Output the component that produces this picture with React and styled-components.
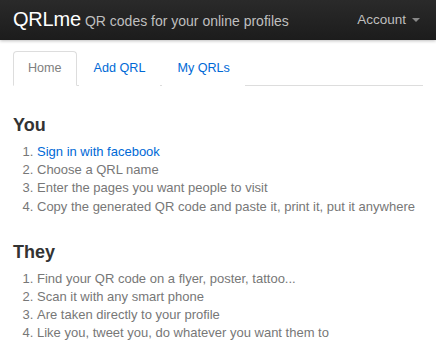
import styled, { createGlobalStyle } from 'styled-components';

const GlobalStyle = createGlobalStyle`
  body {
    margin: 0;
    background: #fff;
    font-family: "Liberation Sans", Arial, sans-serif;
    font-size: 13px;
    line-height: 18px;
    color: #404040;
  }
`;

const Topbar = styled.div`
  height: 40px;
  display: flex;
  align-items: center;
  justify-content: space-between;
  padding: 0 13px;
  background: linear-gradient(to bottom, #2a2a2a, #1c1c1c);
  box-shadow: 0 1px 3px rgba(0, 0, 0, 0.25);
`;

const Brand = styled.div`
  display: flex;
  align-items: baseline;
  gap: 4px;
`;

const Logo = styled.a`
  font-size: 20px;
  color: #fff;
  text-decoration: none;
  letter-spacing: -0.2px;
`;

const Tagline = styled.span`
  font-size: 14px;
  color: #bfbfbf;
`;

const Account = styled.a`
  display: flex;
  align-items: center;
  gap: 6px;
  font-size: 13.5px;
  color: #bfbfbf;
  text-decoration: none;
  margin-right: 3px;
`;

const Caret = styled.span`
  width: 0;
  height: 0;
  border-left: 4px solid transparent;
  border-right: 4px solid transparent;
  border-top: 4px solid #888;
`;

const Container = styled.div`
  padding: 0 13px;
`;

const Tabs = styled.ul`
  display: flex;
  list-style: none;
  margin: 11px 0 26px;
  padding: 0;
  border-bottom: 1px solid #ddd;
`;

const Tab = styled.li`
  margin-right: 2px;
  margin-bottom: -1px;
`;

const TabLink = styled.a`
  display: block;
  padding: 0 14px;
  line-height: 33px;
  font-size: 12.6px;
  text-decoration: none;
  border: 1px solid ${(p) => (p.$active ? '#ddd' : 'transparent')};
  border-bottom-color: ${(p) => (p.$active ? '#fff' : 'transparent')};
  border-radius: 4px 4px 0 0;
  background: #fff;
  color: ${(p) => (p.$active ? '#808080' : '#0069d6')};
`;

const Section = styled.section`
  margin-bottom: 23px;
`;

const Heading = styled.h3`
  margin: 0 0 4px;
  font-size: 18px;
  line-height: 27px;
  font-weight: bold;
  color: #333;
`;

const Steps = styled.ol`
  margin: 0;
  padding-left: 24px;
  color: #777;
`;

const Step = styled.li`
  line-height: 18.2px;
`;

const Link = styled.a`
  color: #0069d6;
  text-decoration: none;
`;

const you = [
  <Link href="#">Sign in with facebook</Link>,
  'Choose a QRL name',
  'Enter the pages you want people to visit',
  'Copy the generated QR code and paste it, print it, put it anywhere',
];

const they = [
  'Find your QR code on a flyer, poster, tattoo...',
  'Scan it with any smart phone',
  'Are taken directly to your profile',
  'Like you, tweet you, do whatever you want them to',
];

export default function App() {
  return (
    <>
      <GlobalStyle />
      <Topbar>
        <Brand>
          <Logo href="#">QRLme</Logo>
          <Tagline>QR codes for your online profiles</Tagline>
        </Brand>
        <Account href="#">
          Account <Caret />
        </Account>
      </Topbar>
      <Container>
        <Tabs>
          <Tab><TabLink $active href="#">Home</TabLink></Tab>
          <Tab><TabLink href="#">Add QRL</TabLink></Tab>
          <Tab><TabLink href="#">My QRLs</TabLink></Tab>
        </Tabs>
        <Section>
          <Heading>You</Heading>
          <Steps>
            {you.map((s, i) => <Step key={i}>{s}</Step>)}
          </Steps>
        </Section>
        <Section>
          <Heading>They</Heading>
          <Steps>
            {they.map((s, i) => <Step key={i}>{s}</Step>)}
          </Steps>
        </Section>
      </Container>
    </>
  );
}
